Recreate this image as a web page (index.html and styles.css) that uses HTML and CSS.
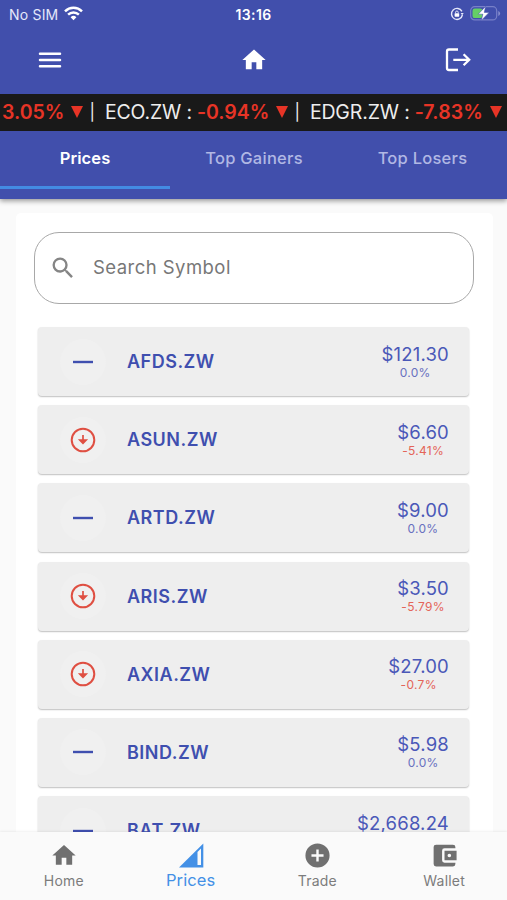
FILE: index.html
```html
<!DOCTYPE html>
<html lang="en">
<head>
<meta charset="utf-8">
<title>Prices</title>
<link rel="stylesheet" href="styles.css">
</head>
<body>
<svg class="defs" width="0" height="0">
  <symbol id="down" viewBox="0 0 26 26"><circle cx="13" cy="13" r="11.3" fill="none" stroke="#df4f42" stroke-width="2"/><path d="M13 8v7M9.9 13.2l3.1 3.2 3.1-3.2z" fill="#df4f42" stroke="#df4f42" stroke-width="1.7"/></symbol>
  <symbol id="flat" viewBox="0 0 26 26"><path d="M3 13h20" stroke="#3f4faf" stroke-width="2.4"/></symbol>
  <symbol id="home" viewBox="0 0 24 24"><path d="M10 20v-6h4v6h5v-8h3L12 3 2 12h3v8z" fill="currentColor"/></symbol>
</svg>
<div class="app">
  <header class="header">
    <div class="status">
      <div class="carrier"><span>No SIM</span>
        <svg width="19" height="15" viewBox="0 0 19 15" fill="none" stroke="#fff" stroke-width="2.5"><path d="M1 5.3a12.2 12.2 0 0 1 17 0M4.1 8.6a7.8 7.8 0 0 1 10.8 0"/><path d="M9.5 14.2l-2.9-3a4.1 4.1 0 0 1 5.8 0z" fill="#fff" stroke="none"/></svg>
      </div>
      <div class="clock">13:16</div>
      <div class="power">
        <svg width="14" height="14" viewBox="0 0 14 14" fill="none" stroke="#e4e7fa" stroke-width="1.4"><path d="M11.9 4.4A5.5 5.5 0 1 0 12.4 8"/><path d="M10.6 6h3.1l-1.5 2.2z" fill="#e4e7fa" stroke="none"/><rect x="4.6" y="6.2" width="4.6" height="3.5" rx=".6" fill="#fff" stroke="none"/><path d="M5.6 6.4V5.3a1.3 1.3 0 0 1 2.6 0v1.1" stroke-width="1"/></svg>
        <svg width="31" height="15" viewBox="0 0 31 15"><rect x=".7" y=".7" width="26" height="13.2" rx="4" fill="none" stroke="#7880c8" stroke-width="1.2"/><path d="M28.3 5v5q1.8-.8 1.8-2.5T28.3 5z" fill="#8990cf"/><rect x="2.5" y="2.5" width="10" height="9.6" rx="2.2" fill="#65cf66"/><path d="M15.6.4L8.2 8.2h4.7l-1.6 6.2 7.8-8h-4.9z" fill="#fff" stroke="#414fac" stroke-width=".5"/></svg>
      </div>
    </div>
    <div class="toolbar">
      <svg width="30" height="30" viewBox="0 0 24 24" stroke="#fff" stroke-width="2" stroke-linecap="round"><path d="M4 7h16M4 12h16M4 17h16"/></svg>
      <svg width="28" height="28"><use href="#home"/></svg>
      <svg width="28" height="28" viewBox="0 0 28 28" fill="none" stroke="#fff" stroke-width="2.3"><path d="M15 3.5H6Q4 3.5 4 5.5V22Q4 24 6 24H15M10.3 13.8H26.3M20.6 8.3l5.6 5.5-5.6 5.5"/></svg>
    </div>
    <div class="ticker"><b>3.05%</b><i></i><span class="bar">|</span><span class="name">ECO.ZW :</span><b>-0.94%</b><i></i><span class="bar">|</span><span class="name">EDGR.ZW :</span><b class="last">-7.83%</b><i></i></div>
    <nav class="tabs"><div class="tab active">Prices</div><div class="tab">Top Gainers</div><div class="tab">Top Losers</div></nav>
  </header>
  <main class="main">
    <section class="panel">
      <div class="search">
        <svg width="28" height="28" viewBox="0 0 24 24" fill="#858585"><path d="M15.5 14h-.79l-.28-.27A6.47 6.47 0 0 0 16 9.5 6.5 6.5 0 1 0 9.5 16c1.61 0 3.09-.59 4.23-1.57l.27.28v.79l5 4.99L20.49 19zm-6 0a4.5 4.5 0 1 1 0-9 4.5 4.5 0 0 1 0 9z"/></svg>
        <span>Search Symbol</span>
      </div>
      <div class="list">
        <div class="card"><div class="mark"><svg><use href="#flat"/></svg></div><div class="symbol">AFDS.ZW</div><div class="quote"><div class="price">$121.30</div><div class="change">0.0%</div></div></div>
        <div class="card"><div class="mark"><svg><use href="#down"/></svg></div><div class="symbol">ASUN.ZW</div><div class="quote"><div class="price">$6.60</div><div class="change loss">-5.41%</div></div></div>
        <div class="card"><div class="mark"><svg><use href="#flat"/></svg></div><div class="symbol">ARTD.ZW</div><div class="quote"><div class="price">$9.00</div><div class="change">0.0%</div></div></div>
        <div class="card"><div class="mark"><svg><use href="#down"/></svg></div><div class="symbol">ARIS.ZW</div><div class="quote"><div class="price">$3.50</div><div class="change loss">-5.79%</div></div></div>
        <div class="card"><div class="mark"><svg><use href="#down"/></svg></div><div class="symbol">AXIA.ZW</div><div class="quote"><div class="price">$27.00</div><div class="change loss">-0.7%</div></div></div>
        <div class="card"><div class="mark"><svg><use href="#flat"/></svg></div><div class="symbol">BIND.ZW</div><div class="quote"><div class="price">$5.98</div><div class="change">0.0%</div></div></div>
        <div class="card"><div class="mark"><svg><use href="#flat"/></svg></div><div class="symbol">BAT.ZW</div><div class="quote"><div class="price">$2,668.24</div></div></div>
      </div>
    </section>
  </main>
  <nav class="bottom">
    <div class="item"><svg width="28" height="28"><use href="#home"/></svg><span>Home</span></div>
    <div class="item current"><svg width="28" height="28" viewBox="0 0 28 28"><path d="M2 26L26.3 2v24z" fill="#4390e6"/><path d="M20.5 10.5l3.5-3.5v16.5h-3.5z" fill="#fafafa"/></svg><span>Prices</span></div>
    <div class="item"><svg width="29" height="29" viewBox="0 0 24 24"><path d="M12 2a10 10 0 1 0 0 20 10 10 0 0 0 0-20zm5 11h-4v4h-2v-4H7v-2h4V7h2v4h4z" fill="#707070"/></svg><span>Trade</span></div>
    <div class="item"><svg width="29" height="29" viewBox="0 0 24 24"><path d="M21 18v1a2 2 0 0 1-2 2H5a2 2 0 0 1-2-2V5a2 2 0 0 1 2-2h14a2 2 0 0 1 2 2v1h-9a2 2 0 0 0-2 2v8a2 2 0 0 0 2 2zm-9-2h10V8H12zm4-2.5a1.5 1.5 0 1 1 0-3 1.5 1.5 0 0 1 0 3z" fill="#707070"/></svg><span>Wallet</span></div>
  </nav>
</div>
</body>
</html>
```
FILE: styles.css
```css
* { box-sizing: border-box; }
body { margin: 0; font-family: Inter, "Liberation Sans", sans-serif; background: #fafafa; }
svg { display: block; flex: none; }
.defs { position: absolute; }
.app { width: 507px; height: 900px; display: flex; flex-direction: column; overflow: hidden; }
.header { height: 198.5px; flex: none; background: #414fac; color: #fff; z-index: 1; box-shadow: 0 2px 5px rgba(0,0,0,.4); }
.status { height: 28px; display: grid; grid-template-columns: 1fr auto 1fr; align-items: center; padding: 0 6px 0 9px; font-size: 14px; }
.carrier { display: flex; align-items: center; gap: 6px; color: #e4e7fa; letter-spacing: .2px; }
.carrier svg { margin-top: -2px; }
.clock { font-weight: 600; letter-spacing: .4px; margin-right: 3px; }
.power { display: flex; justify-content: flex-end; align-items: center; gap: 6px; margin-top: -1px; }
.toolbar { height: 66px; display: flex; justify-content: space-between; align-items: center; padding: 0 36px 3px 35px; }
.ticker { height: 36.5px; background: #191919; display: flex; align-items: center; font-size: 19.5px; line-height: 35px; white-space: nowrap; padding-left: 2px; color: #eee; font-feature-settings: "calt" 0; }
.ticker b { color: #e73426; font-weight: 600; }
.ticker .last { letter-spacing: .15px; }
.ticker i { width: 0; height: 0; flex: none; border: 6.5px solid transparent; border-top: 12px solid #e73426; border-bottom: 0; margin-left: 7px; }
.bar { width: 21.5px; flex: none; padding-left: 6px; font-size: 16.5px; }
.name { margin-right: 5px; letter-spacing: -.15px; }
.tabs { height: 58px; display: grid; grid-template-columns: 170px 168px 169px; }
.tab { height: 58px; display: flex; align-items: center; justify-content: center; font-size: 16.5px; font-weight: 500; color: #b1b8e4; border-bottom: 3px solid transparent; letter-spacing: .25px; padding-bottom: 1px; }
.tab.active { color: #fff; font-weight: 600; letter-spacing: .1px; border-color: #438be3; }
.main { flex: 1; min-height: 0; overflow: hidden; padding: 14.5px 14.5px 0 15.5px; }
.panel { background: #fff; border-radius: 5px; padding: 19px 18.5px 0; height: 720px; }
.search { height: 72px; width: 440px; border: 1.3px solid #a8a8a8; border-radius: 25px; display: flex; align-items: center; gap: 16px; padding-left: 14px; font-size: 18.5px; color: #777; letter-spacing: .45px; }
.search span { margin-top: -3px; }
.list { display: flex; flex-direction: column; gap: 9.2px; padding: 23px 5px 0 4px; }
.card { height: 69px; flex: none; background: #eee; border-radius: 4px; box-shadow: 0 1px 1.5px rgba(0,0,0,.25); display: flex; align-items: center; padding: 0 20px 0 22px; }
.mark { width: 46px; height: 46px; border-radius: 50%; background: #f0f0f0; display: flex; align-items: center; justify-content: center; }
.mark svg { width: 26px; height: 26px; }
.symbol { margin-left: 21px; font-size: 18px; font-weight: 600; color: #3f4faf; letter-spacing: .5px; }
.quote { height: 38px; margin-left: auto; text-align: center; color: #4a58b8; }
.price { font-size: 18.5px; line-height: 22px; letter-spacing: .2px; }
.change { font-size: 12px; line-height: 16px; letter-spacing: .3px; color: #6870c0; }
.loss { color: #e46458; }
.bottom { height: 68px; flex: none; background: #fafafa; z-index: 1; display: grid; grid-template-columns: repeat(4, 1fr); box-shadow: 0 -1px 2px rgba(0,0,0,.06); }
.item { display: flex; flex-direction: column; align-items: center; padding: 9px 0 0 1px; font-size: 14px; line-height: 20px; color: #707070; letter-spacing: .2px; }
.item svg { height: 29px; }
.item span { margin-top: 1px; color: #7c7c7c; }
.item.current span { font-size: 16.5px; color: #4390e6; margin-top: 0; letter-spacing: .1px; }
```
